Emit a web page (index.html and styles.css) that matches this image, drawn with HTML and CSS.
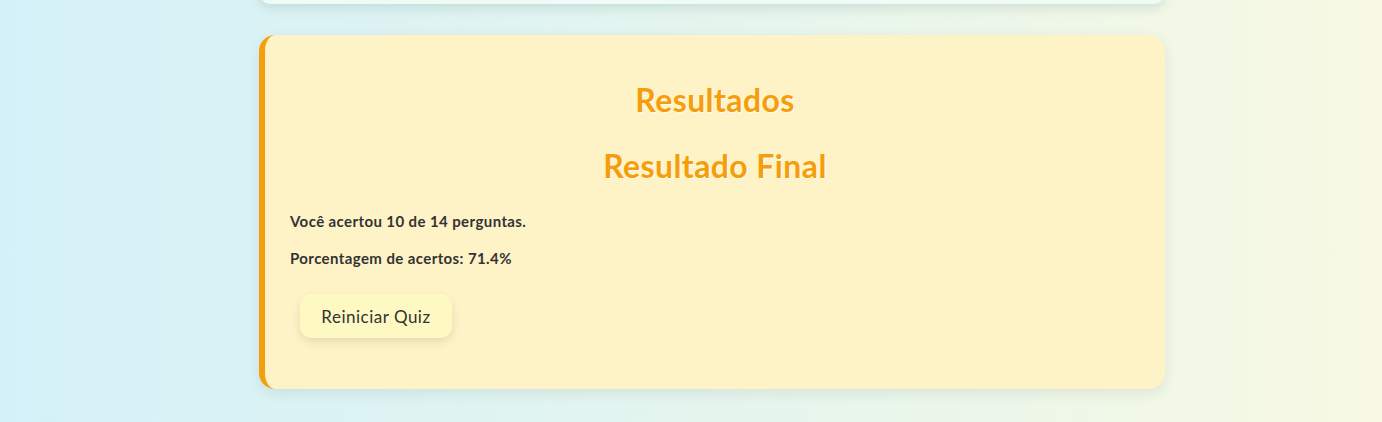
FILE: index.html
```html
<!DOCTYPE html>
<html lang="pt">
<head>
<meta charset="utf-8">
<title>Resultados</title>
<link rel="stylesheet" href="styles.css">
</head>
<body>
<div class="page">
  <div class="top-card"></div>
  <section class="result-card">
    <h2 class="title">Resultados</h2>
    <h2 class="title title-final">Resultado Final</h2>
    <p class="line">Você acertou 10 de 14 perguntas.</p>
    <p class="line">Porcentagem de acertos: 71.4%</p>
    <button class="restart">Reiniciar Quiz</button>
  </section>
</div>
</body>
</html>
```

FILE: styles.css
```css
html, body {
  margin: 0;
  padding: 0;
  height: 100%;
}
body {
  background: linear-gradient(90deg, #d4f1f9 0%, #e4f5ee 50%, #f7f9e3 100%);
  font-family: "Lato", "Noto Sans", sans-serif;
  color: #333;
  overflow: hidden;
}
.page {
  width: 906px;
  margin-left: calc(50% - 432px);
  display: flex;
  flex-direction: column;
}
.top-card {
  height: 24px;
  margin-top: -20px;
  background: #effcf5;
  border-radius: 16px;
  box-shadow: 0 4px 12px rgba(0, 60, 60, 0.12);
}
.result-card {
  margin-top: 31px;
  height: 354px;
  box-sizing: border-box;
  background: #fef3c7;
  border-left: 6px solid #f59e0b;
  border-radius: 16px;
  box-shadow: 0 4px 14px rgba(0, 0, 0, 0.08);
  padding: 48px 25px 0 25px;
  display: flex;
  flex-direction: column;
  align-items: flex-start;
}
.title {
  align-self: stretch;
  text-align: center;
  margin: 0;
  font-size: 32px;
  letter-spacing: 0.4px;
  font-weight: 700;
  line-height: 34px;
  color: #f59e0b;
  text-shadow: 1px 1px 0 rgba(255, 255, 255, 0.8);
}
.title-final {
  margin-top: 32px;
}
.line {
  margin: 0;
  font-size: 15px;
  letter-spacing: 0.4px;
  font-weight: 700;
  line-height: 20px;
  color: #333;
}
.title-final + .line {
  margin-top: 28px;
}
.line + .line {
  margin-top: 17px;
}
.restart {
  margin-top: 26px;
  margin-left: 10px;
  width: 152px;
  height: 44px;
  border: none;
  border-radius: 12px;
  background: #fef9c3;
  color: #333;
  font-family: "Lato", "Noto Sans", sans-serif;
  font-size: 17px;
  letter-spacing: 0.5px;
  box-shadow: 0 4px 10px rgba(0, 0, 0, 0.1);
  cursor: pointer;
}
```
